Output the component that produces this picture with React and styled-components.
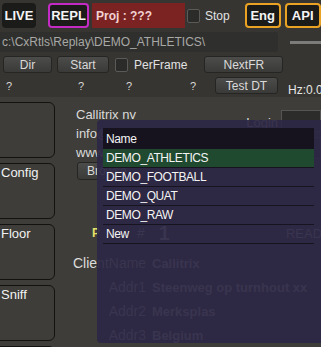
import React from 'react'
import styled, { createGlobalStyle } from 'styled-components'

const Global = createGlobalStyle`
  body {
    margin: 0;
    background: #3c3b37;
    font-family: "Liberation Sans", Arial, sans-serif;
  }
`

const Page = styled.div`
  position: relative;
  width: 321px;
  height: 347px;
  overflow: hidden;
  background: #3e3d39;
  color: #dcdcdc;
`

const Header = styled.div`
  background: #363531;
  padding-bottom: 3px;
`

const TopBar = styled.div`
  display: flex;
  align-items: center;
  height: 25px;
  padding: 3px 0 0 2px;
`

const ModeButton = styled.div`
  display: flex;
  align-items: center;
  justify-content: center;
  box-sizing: border-box;
  width: ${p => p.$w}px;
  height: 25px;
  margin-left: ${p => p.$ml || 0}px;
  background: #1b1b1a;
  border: 2px solid ${p => p.$border || '#1b1b1a'};
  border-radius: 4px;
  color: #f4f4f4;
  font-weight: bold;
  font-size: 13px;
`

const ProjBox = styled.div`
  display: flex;
  align-items: center;
  width: 89px;
  height: 25px;
  margin-left: 3px;
  padding-left: 4px;
  background: #7b2322;
  color: #f2d2d2;
  font-weight: bold;
  font-size: 12px;
`

const Check = styled.div`
  box-sizing: border-box;
  width: 13px;
  height: 14px;
  margin-left: ${p => p.$ml || 0}px;
  background: #2b2b2a;
  border: 1px solid #5a5a58;
  border-radius: 2px;
`

const Label = styled.span`
  margin-left: ${p => p.$ml || 0}px;
  font-size: 12px;
  color: #e2e2e2;
`

const PathRow = styled.div`
  display: flex;
  align-items: center;
  margin-top: 4px;
  height: 20px;
`

const PathBox = styled.div`
  display: flex;
  align-items: center;
  width: 276px;
  height: 20px;
  padding-left: 2px;
  background: #2f2f2d;
  border-radius: 0 3px 3px 0;
  color: #a8a8a6;
  font-size: 12px;
`

const Slider = styled.div`
  margin-left: 12px;
  flex: 1;
  height: 3px;
  background: #7c7c7a;
`

const ButtonRow = styled.div`
  display: flex;
  align-items: center;
  margin-top: 4px;
  padding-left: 3px;
  height: 17px;
`

const Button = styled.div`
  display: flex;
  align-items: center;
  justify-content: center;
  box-sizing: border-box;
  width: ${p => p.$w}px;
  height: ${p => p.$h || 17}px;
  margin-left: ${p => p.$ml || 0}px;
  background: linear-gradient(#4c4c4a, #3a3a38);
  border: 1px solid #252524;
  border-radius: 3px;
  color: #dadada;
  font-size: 12px;
  flex-shrink: 0;
`

const InfoRow = styled.div`
  display: flex;
  align-items: center;
  margin-top: 4px;
  height: 17px;
`

const Q = styled.span`
  width: ${p => p.$w}px;
  margin-left: ${p => p.$ml || 0}px;
  font-size: 11px;
  color: #d6d6d6;
  flex-shrink: 0;
`

const Hz = styled.span`
  margin-left: 10px;
  margin-top: 8px;
  font-size: 12px;
  color: #e6e6e6;
  white-space: nowrap;
`

const Body = styled.div`
  display: flex;
  margin-top: 5px;
`

const Side = styled.div`
  display: flex;
  flex-direction: column;
  gap: 5px;
  margin-left: -6px;
  width: 61px;
  flex-shrink: 0;
`

const Tile = styled.div`
  box-sizing: border-box;
  height: 56px;
  padding: 1px 0 0 6px;
  border: 1.5px solid #121211;
  border-radius: 6px;
  color: #f2f2f2;
  font-size: 13px;
`

const Main = styled.div`
  flex: 1;
  padding-left: 21px;
  min-width: 0;
`

const Company = styled.div`
  display: flex;
  height: 60px;
`

const CompanyLines = styled.div`
  width: 150px;
  padding-top: 3px;
  font-size: 13px;
  line-height: 19px;
  color: #dadada;
  white-space: nowrap;
`

const LoginGrid = styled.div`
  display: grid;
  grid-template-columns: 60px 40px;
  grid-auto-rows: 22px;
  row-gap: 5px;
  align-items: center;
  margin: 8px 0 0 7px;
  font-size: 13px;
  color: #dadada;
`

const FieldLabel = styled.span`
  text-align: right;
  padding: 3px 3px 0 0;
`

const Field = styled.div`
  height: 22px;
  box-sizing: border-box;
  background: #2c2c2a;
  border: 1px solid #555;
`

const ReadRow = styled.div`
  display: flex;
  align-items: center;
  margin-top: 44px;
  height: 18px;
`

const P = styled.span`
  margin-left: 16px;
  color: #e4e06a;
  font-weight: bold;
  font-size: 12px;
`

const Hash = styled.span`
  margin-left: 37px;
  font-size: 14px;
`

const Big = styled.span`
  margin-left: 14px;
  font-size: 20px;
  font-weight: bold;
`

const Read = styled.span`
  margin-left: 116px;
  font-size: 13px;
  white-space: nowrap;
`

const ClientGrid = styled.div`
  display: grid;
  grid-template-columns: 79px auto;
  grid-auto-rows: 16px;
  row-gap: 8px;
  align-items: center;
  margin-top: 13px;
  margin-left: -3px;
  font-size: 14px;
  white-space: nowrap;
`

const ClientLabel = styled.span`
  text-align: right;
  padding-right: 6px;
`

const ClientValue = styled.span`
  font-weight: bold;
  font-size: 13px;
`

const Popup = styled.div`
  position: absolute;
  left: 97px;
  top: 120px;
  width: 240px;
  height: 223px;
  box-sizing: border-box;
  padding: 8px 0 0 6px;
  background: rgba(44, 39, 68, 0.93);
  border-radius: 4px;
`

const List = styled.div`
  width: 211px;
  display: flex;
  flex-direction: column;
`

const Row = styled.div`
  display: flex;
  align-items: center;
  box-sizing: border-box;
  height: ${p => (p.$head ? 21 : 19)}px;
  padding-left: 3px;
  background: ${p => (p.$head ? '#16131f' : p.$active ? '#1f4a2f' : 'transparent')};
  border-bottom: ${p => (p.$head ? 'none' : '1px solid #17141f')};
  color: #f4f4f4;
  font-size: 12px;
  letter-spacing: -0.4px;
`

const projects = ['DEMO_ATHLETICS', 'DEMO_FOOTBALL', 'DEMO_QUAT', 'DEMO_RAW', 'New']

const client = [
  ['ClientName', 'Callitrix'],
  ['Addr1', 'Steenweg op turnhout xx'],
  ['Addr2', 'Merksplas'],
  ['Addr3', 'Belgium'],
]

export default function App() {
  return (
    <Page>
      <Global />
      <Header>
        <TopBar>
          <ModeButton $w={34}>LIVE</ModeButton>
          <ModeButton $w={41} $ml={12} $border="#c42ac4">REPL</ModeButton>
          <ProjBox>Proj : ???</ProjBox>
          <Check $ml={2} />
          <Label $ml={5}>Stop</Label>
          <ModeButton $w={36} $ml={15} $border="#e9a224">Eng</ModeButton>
          <ModeButton $w={36} $ml={4} $border="#e9a224">API</ModeButton>
        </TopBar>
        <PathRow>
          <PathBox>c:\CxRtls\Replay\DEMO_ATHLETICS\</PathBox>
          <Slider />
        </PathRow>
        <ButtonRow>
          <Button $w={49}>Dir</Button>
          <Button $w={52} $ml={5}>Start</Button>
          <Check $ml={6} />
          <Label $ml={6}>PerFrame</Label>
          <Button $w={79} $ml={17}>NextFR</Button>
        </ButtonRow>
        <InfoRow>
          <Q $w={72} $ml={6}>?</Q>
          <Q $w={48}>?</Q>
          <Q $w={64}>?</Q>
          <Q $w={25}>?</Q>
          <Button $w={63}>Test DT</Button>
          <Hz>Hz:0.0</Hz>
        </InfoRow>
      </Header>
      <Body>
        <Side>
          <Tile />
          <Tile>Config</Tile>
          <Tile>Floor</Tile>
          <Tile>Sniff</Tile>
          <Tile />
        </Side>
        <Main>
          <Company>
            <CompanyLines>
              <div>Callitrix nv</div>
              <div>info@callitrix.com</div>
              <div>www.callitrix.com</div>
            </CompanyLines>
            <LoginGrid>
              <FieldLabel>Login</FieldLabel>
              <Field />
              <FieldLabel>Password</FieldLabel>
              <Field />
            </LoginGrid>
          </Company>
          <Button $w={60} $h={18} $ml={1}>Browse</Button>
          <ReadRow>
            <P>P</P>
            <Hash>#</Hash>
            <Big>1</Big>
            <Read>READ all</Read>
          </ReadRow>
          <ClientGrid>
            {client.map(([k, v]) => (
              <React.Fragment key={k}>
                <ClientLabel>{k}</ClientLabel>
                <ClientValue>{v}</ClientValue>
              </React.Fragment>
            ))}
          </ClientGrid>
        </Main>
      </Body>
      <Popup>
        <List>
          <Row $head>Name</Row>
          {projects.map((p, i) => (
            <Row key={p} $active={i === 0}>{p}</Row>
          ))}
        </List>
      </Popup>
    </Page>
  )
}
